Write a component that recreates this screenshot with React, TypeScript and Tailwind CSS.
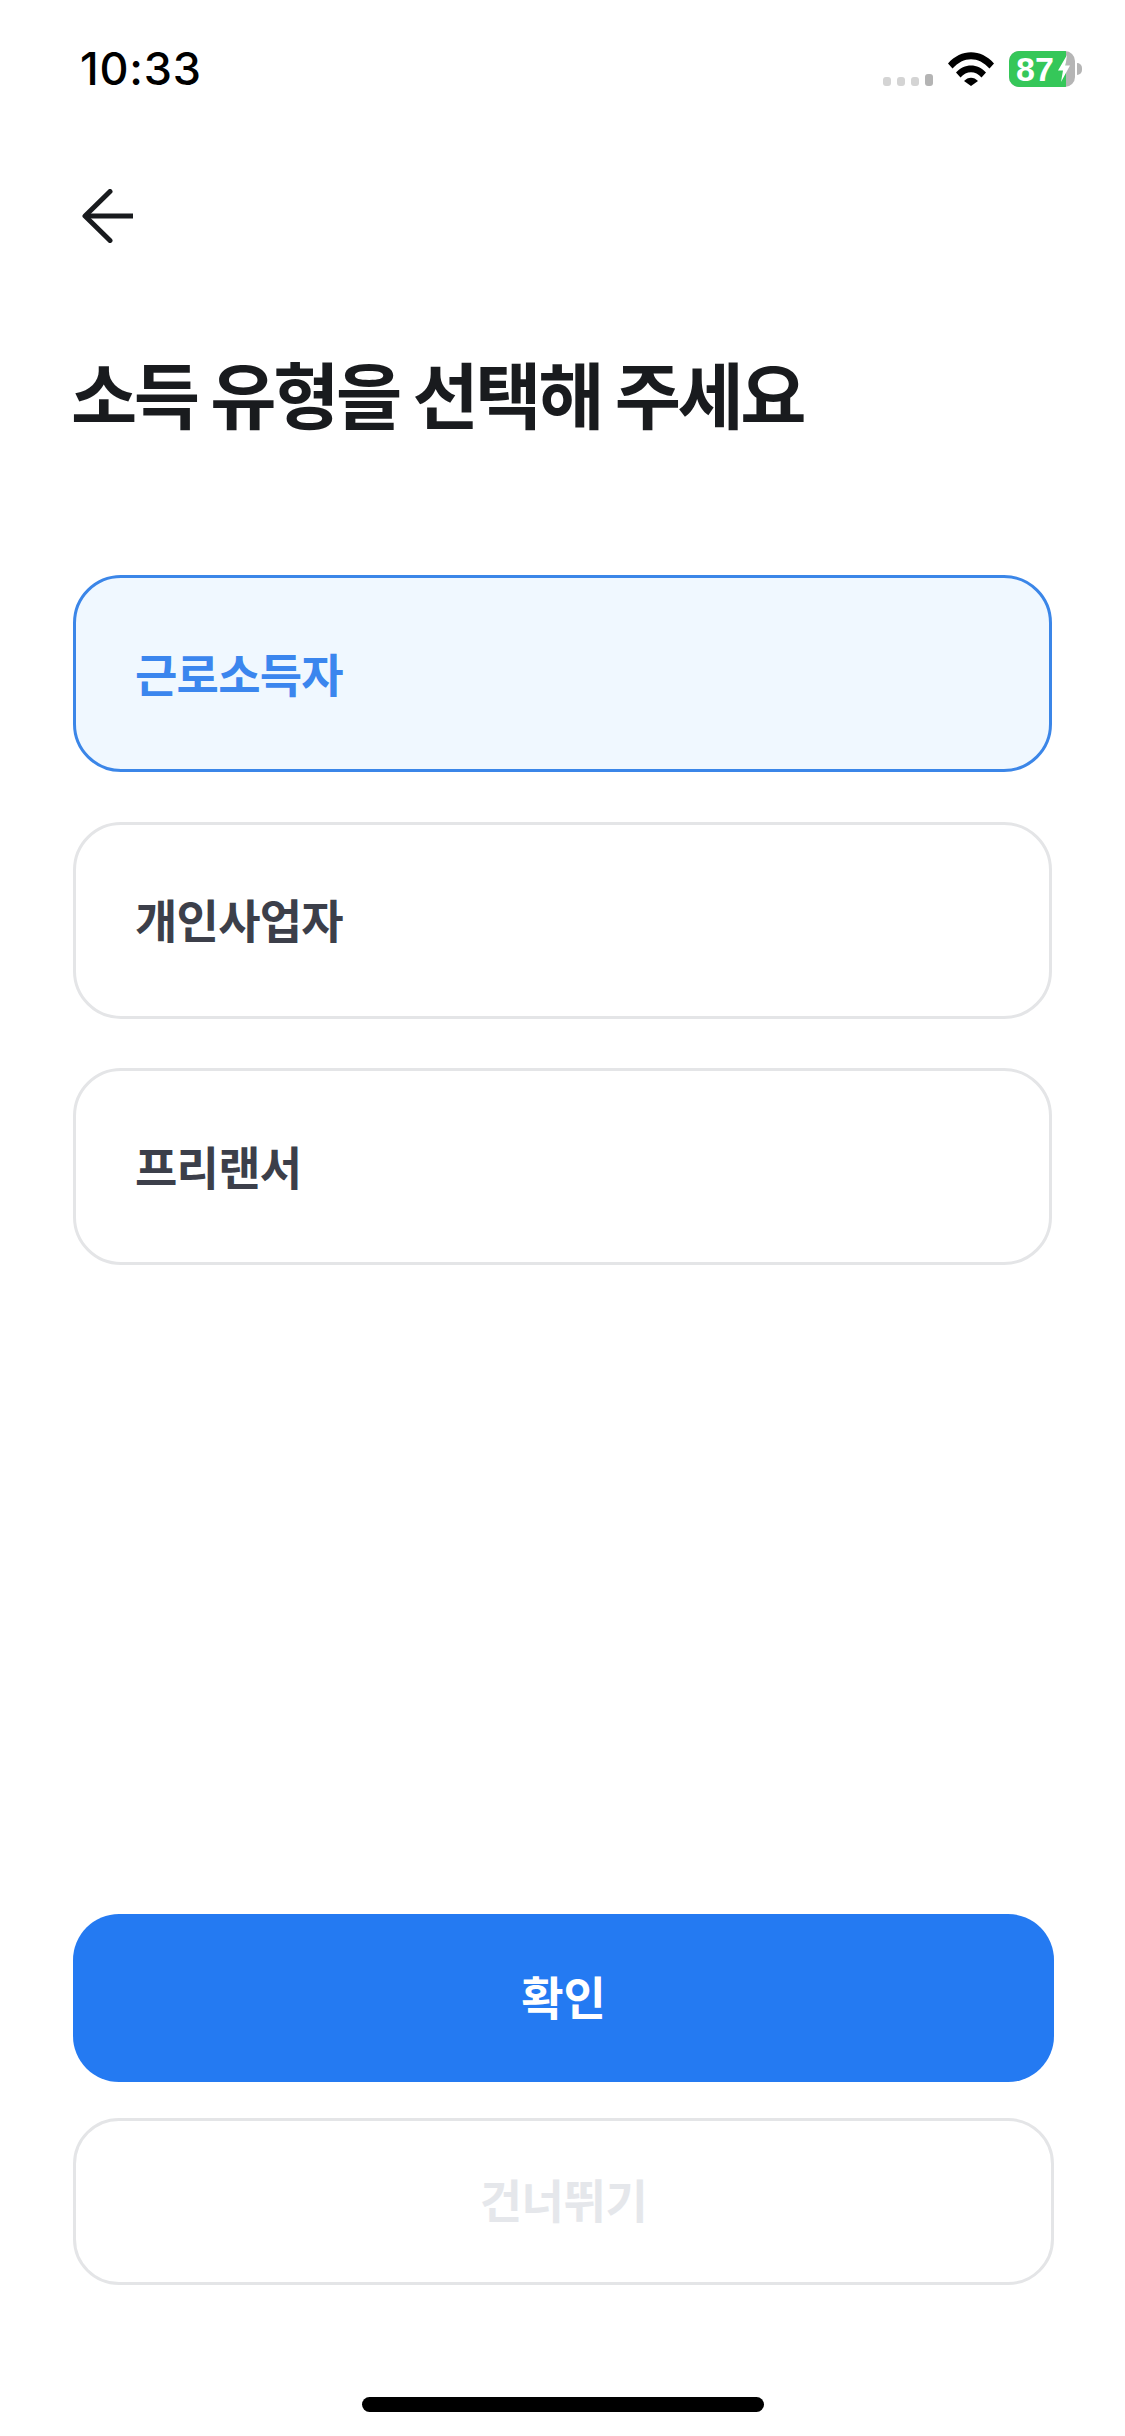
const items = [
  { label: "근로소득자", selected: true },
  { label: "개인사업자", selected: false },
  { label: "프리랜서", selected: false },
];

function StatusBar() {
  return (
    <div className="flex h-[138px] items-start justify-between pl-[80px] pr-[43px] pt-[51px]">
      <span className="text-[45px] leading-[36px] font-[550] tracking-[0.8px] text-black">10:33</span>
      <div className="flex items-center">
        <div className="mt-[22px] mr-[15px] flex items-end gap-[6px]">
          <span className="h-[9px] w-[8px] rounded-[3px] bg-[#d4d4d4]" />
          <span className="h-[9px] w-[8px] rounded-[3px] bg-[#d4d4d4]" />
          <span className="h-[9px] w-[8px] rounded-[3px] bg-[#d4d4d4]" />
          <span className="h-[12px] w-[8px] rounded-[3px] bg-[#b4b4b4]" />
        </div>
        <svg viewBox="0 0 46 34" className="mr-[15px] h-[34px] w-[46px]">
          <path d="M0 11.5C13 -3.5 33 -3.5 46 11.5L41.5 16.5C30.5 4 15.5 4 4.500 16.500Z" fill="#000" />
          <path d="M8 20.500C16 11 30 11 38 20.500L33.500 25.500C27.500 18.500 18.500 18.500 12.500 25.500Z" fill="#000" />
          <path d="M16 29C20 24.500 26 24.500 30 29L23 34Z" fill="#000" />
        </svg>
        <div className="relative flex h-[36px] w-[66px] overflow-hidden rounded-[10px] bg-[#b5b5b5]">
          <div className="flex h-full w-[57px] items-center bg-[#35c759] pl-[7px]">
            <span className="text-[34px] leading-none font-bold text-white" style={{ fontFamily: '"Liberation Sans", sans-serif' }}>87</span>
          </div>
          <svg viewBox="0 0 12 27" className="absolute top-[4px] left-[49px] h-[27px] w-[12px]">
            <path d="M9 0L0 15.500H5L3 27L12 10.500H7.500Z" fill="#fff" />
          </svg>
        </div>
        <span className="ml-[2px] h-[12px] w-[5px] rounded-r-[5px] bg-[#b5b5b5]" />
      </div>
    </div>
  );
}

export default function App() {
  return (
    <div
      className="flex h-[2436px] w-[1125px] flex-col bg-white"
      style={{ fontFamily: 'Inter, "Noto Sans CJK KR", sans-serif' }}
    >
      <StatusBar />

      <div className="px-[73px]">
        <svg viewBox="0 0 54 54" className="ml-[9px] mt-[51px] block h-[54px] w-[54px]" fill="none" stroke="#191b1e" strokeWidth="5" strokeLinecap="round" strokeLinejoin="round">
          <path d="M3 27H51" strokeLinecap="butt" />
          <path d="M28 2.500L3 27L28 51.500" />
        </svg>

        <h1 className="-ml-[2px] mt-[114px] text-[72px] leading-[80px] font-bold tracking-[-3.400px] text-[#191b1e]">
          소득 유형을 선택해 주세요
        </h1>

        <div className="mt-[138px] flex flex-col gap-[49.5px]">
          {items.map((item) => (
            <div
              key={item.label}
              className={
                item.selected
                  ? "flex h-[197px] items-center rounded-[48px] border-[3px] border-[#3b86e8] bg-[#f0f8ff] pl-[59px]"
                  : "flex h-[197px] items-center rounded-[48px] border-[3px] border-[#e4e5e7] bg-white pl-[59px]"
              }
            >
              <span
                className={
                  item.selected
                    ? "mt-[2px] text-[46px] leading-none font-bold tracking-[-0.750px] text-[#3b86ee]"
                    : "mt-[2px] text-[46px] leading-none font-bold tracking-[-0.750px] text-[#3c3f4a]"
                }
              >
                {item.label}
              </span>
            </div>
          ))}
        </div>
      </div>

      <div className="mt-auto flex flex-col gap-[36px] pl-[73px] pr-[71px]">
        <button className="h-[168px] rounded-[46px] bg-[#247af2] text-[46px] font-bold tracking-[0px] text-white">
          확인
        </button>
        <button className="h-[167px] rounded-[46px] border-[3px] border-[#e4e5e7] bg-white text-[46px] font-bold tracking-[-0.400px] text-[#e5e7eb]">
          건너뛰기
        </button>
      </div>

      <div className="flex h-[151px] items-start justify-center pt-[112px]">
        <span className="h-[15px] w-[402px] rounded-full bg-black" />
      </div>
    </div>
  );
}
